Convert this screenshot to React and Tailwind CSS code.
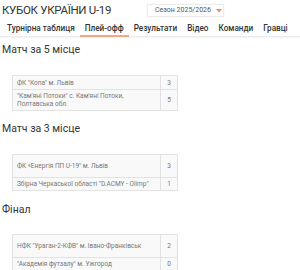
const MATCHES = [
  {
    title: "Матч за 5 місце",
    rows: [
      { team: <>ФК "Копа" м. Львів</>, score: 3, h: "h-[14px]" },
      { team: <>"Кам'яні Потоки" с. Кам'яні Потоки,<br />Полтавська обл.</>, score: 5, h: "h-[21px]" },
    ],
  },
  {
    title: "Матч за 3 місце",
    rows: [
      { team: <>ФК «Енергія ПП U-19" м. Львів</>, score: 3, h: "h-[23px]" },
      { team: <>Збірна Черкаської області "D.ACMY - Olimp"</>, score: 1, h: "h-[13px]" },
    ],
  },
  {
    title: "Фінал",
    rows: [
      { team: <>НФК "Ураган-2-КФВ" м. Івано-Франківськ</>, score: 2, h: "h-[23px]" },
      { team: <>"Академія футзалу" м. Ужгород</>, score: 0, h: "h-[13px]" },
    ],
  },
];

const TABS = ["Турнірна таблиця", "Плей-офф", "Результати", "Відео", "Команди", "Гравці"];

function MatchTable({ rows }) {
  return (
    <table className="ml-[12px] w-[166px] border-collapse bg-[#f9f9f9] text-[6.5px] leading-[8px] text-[#777]">
      <tbody>
        {rows.map((r, i) => (
          <tr key={i}>
            <td className={`${r.h} w-[148px] border border-[#e2e2e2] pl-[4px] pr-[2px] align-middle`}>
              {r.team}
            </td>
            <td className={`${r.h} border border-[#e2e2e2] text-center align-middle`}>{r.score}</td>
          </tr>
        ))}
      </tbody>
    </table>
  );
}

export default function App() {
  return (
    <div className="w-[300px] h-[270px] overflow-hidden bg-white font-['Roboto',sans-serif] text-[#333]">
      {/* header */}
      <div className="flex h-[21px] items-center">
        <h1 className="w-[147px] pl-[2px] text-[11.5px] leading-none font-normal tracking-[-0.3px] text-[#333]">
          КУБОК УКРАЇНИ U-19
        </h1>
        <div className="flex h-[13px] w-[77px] items-center border border-[#ececec] pl-[7px] text-[7px] text-[#555] shadow-[0_0_2px_rgba(0,0,0,0.05)]">
          Сезон 2025/2026
          <svg className="ml-[5px]" width="6" height="4" viewBox="0 0 6 4">
            <path d="M0 0 L6 0 L3 3.5 Z" fill="#f08c63" />
          </svg>
        </div>
      </div>

      {/* tabs */}
      <div className="flex h-[16px] items-stretch border-b border-[#ececec] pl-[2px] shadow-[0_1px_1px_rgba(0,0,0,0.04)]">
        {TABS.map((t) => (
          <div
            key={t}
            className={`flex items-center px-[5px] text-[8.2px] font-medium text-[#333] ${
              t === "Плей-офф" ? "border-b-2 border-[#f5a588] -mb-px" : ""
            }`}
          >
            {t}
          </div>
        ))}
      </div>

      {MATCHES.map((m, i) => (
        <section key={m.title}>
          <h2
            className={`${
              i === 0 ? "mt-[7px]" : i === 1 ? "mt-[12px]" : "mt-[13px]"
            } h-[12px] pl-[2px] text-[10.5px] leading-[12px] font-normal text-[#333]`}
          >
            {m.title}
          </h2>
          <div className={i === 2 ? "mt-[18px]" : "mt-[19px]"}>
            <MatchTable rows={m.rows} />
          </div>
        </section>
      ))}
    </div>
  );
}
